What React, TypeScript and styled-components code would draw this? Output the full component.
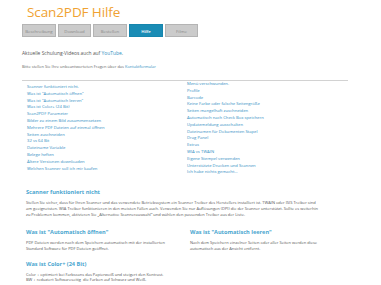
import React from "react";
import styled, { createGlobalStyle } from "styled-components";

const Global = createGlobalStyle`
  html, body { margin: 0; padding: 0; background: #fff; }
  body { font-family: "Open Sans", "Liberation Sans", sans-serif; color: #555; }
  * { box-sizing: border-box; }
`;

const Page = styled.div`
  width: 381px;
  height: 285px;
  overflow: hidden;
  padding: 3px 0 0 22px;
`;

const Content = styled.div`
  width: 326px;
`;

const Title = styled.h1`
  margin: 0 0 0 5px;
  font-size: 13.5px;
  font-weight: 400;
  line-height: 18px;
  color: #f0a232;
  letter-spacing: -0.1px;
`;

const Tabs = styled.nav`
  display: flex;
  gap: 2px;
  margin-top: 3px;
`;

const Tab = styled.div<{ $active?: boolean; $w: number }>`
  width: ${(p) => p.$w}px;
  height: 13px;
  display: flex;
  align-items: center;
  justify-content: center;
  font-size: 4.3px;
  border: 1px solid ${(p) => (p.$active ? "#1685ad" : "#b4b4b4")};
  background: ${(p) => (p.$active ? "#1a8cb5" : "#cbcbcb")};
  color: ${(p) => (p.$active ? "#fff" : "#8a8a8a")};
  font-weight: ${(p) => (p.$active ? 600 : 400)};
`;

const Intro = styled.p`
  margin: 13px 0 0 0;
  font-size: 4.9px;
  line-height: 7px;
  color: #555;
`;

const Small = styled.p`
  margin: 7px 0 0 0;
  font-size: 4px;
  line-height: 6px;
  color: #666;
`;

const Link = styled.a`
  color: #2f8fc2;
  text-decoration: none;
`;

const Rule = styled.hr`
  margin: 10px 0 0 0;
  border: 0;
  border-top: 1px solid #d2d2d2;
`;

const Columns = styled.div`
  display: grid;
  grid-template-columns: 165px 1fr;
`;

const LinkList = styled.ul<{ $top: number; $left: number }>`
  list-style: none;
  margin: 0;
  padding: ${(p) => p.$top}px 0 0 ${(p) => p.$left}px;
  font-size: 4.2px;
  line-height: 6.8px;
`;

const Item = styled.li`
  color: #3590c4;
  white-space: nowrap;
`;

const Section = styled.section<{ $top: number }>`
  padding-left: 4px;
  margin-top: ${(p) => p.$top}px;
`;

const Heading = styled.h2`
  margin: 0;
  font-size: 5.6px;
  line-height: 8px;
  font-weight: 700;
  color: #4aa6cf;
`;

const Body = styled.p<{ $top?: number }>`
  margin: ${(p) => p.$top ?? 4}px 0 0 0;
  font-size: 4px;
  line-height: 5.7px;
  color: #555;
  white-space: nowrap;
`;

const Pair = styled.div`
  display: grid;
  grid-template-columns: 164px 1fr;
`;

const left = [
  "Scanner funktioniert nicht.",
  'Was ist "Automatisch öffnen"',
  'Was ist "Automatisch leeren"',
  "Was ist Color+ (24 Bit)",
  "Scan2PDF Parameter",
  "Bilder zu einem Bild zusammensetzen",
  "Mehrere PDF Dateien auf einmal öffnen",
  "Seiten zuschneiden",
  "32 vs 64 Bit",
  "Dateiname Variable",
  "Belege heften",
  "Ältere Versionen downloaden",
  "Welchen Scanner soll ich mir kaufen",
];

const right = [
  "Menü verschwunden.",
  "Profile",
  "Barcode",
  "Keine Farbe oder falsche Seitengröße",
  "Seiten mangelhaft zuschneiden",
  "Automatisch nach Check Box speichern",
  "Updatemeldung ausschalten",
  "Dateinamen für Dokumenten Stapel",
  "Drag Panel",
  "Extras",
  "WIA vs TWAIN",
  "Eigene Stempel verwenden",
  "Unterstützte Drucken und Scannen",
  "Ich habe nichts gemacht...",
];

const tabs = [
  { label: "Beschreibung", w: 34 },
  { label: "Download", w: 33 },
  { label: "Bestellen", w: 34 },
  { label: "Hilfe", w: 34, active: true },
  { label: "Filme", w: 33 },
];

export default function App() {
  return (
    <Page>
      <Global />
      <Content>
        <Title>Scan2PDF Hilfe</Title>
        <Tabs>
          {tabs.map((t) => (
            <Tab key={t.label} $w={t.w} $active={t.active}>
              {t.label}
            </Tab>
          ))}
        </Tabs>
        <Intro>
          Aktuelle Schulung-Videos auch auf <Link href="#">YouTube</Link>.
        </Intro>
        <Small>
          Bitte stellen Sie Ihre unbeantworteten Fragen über das{" "}
          <Link href="#">Kontaktformular</Link>
        </Small>
        <Rule />
        <Columns>
          <LinkList $top={3} $left={5}>
            {left.map((l) => (
              <Item key={l}>{l}</Item>
            ))}
          </LinkList>
          <LinkList $top={0} $left={0}>
            {right.map((l) => (
              <Item key={l}>{l}</Item>
            ))}
          </LinkList>
        </Columns>
        <Section $top={12}>
          <Heading>Scanner funktioniert nicht</Heading>
          <Body $top={4}>
            Stellen Sie sicher, dass für Ihren Scanner und das verwendete Betriebssystem ein Scanner Treiber des Herstellers installiert ist. TWAIN oder ISIS Treiber sind
            <br />
            am geeignetsten. WIA Treiber funktionieren in den meisten Fällen auch. Verwenden Sie nur Auflösungen (DPI) die der Scanner unterstützt. Sollte es weiterhin
            <br />
            zu Problemen kommen, aktivieren Sie „Alternative Scannerauswahl“ und wählen den passenden Treiber aus der Liste.
          </Body>
        </Section>
        <Section $top={11}>
          <Pair>
            <div>
              <Heading>Was ist "Automatisch öffnen"</Heading>
              <Body>
                PDF Dateien werden nach dem Speichern automatisch mit der installierten
                <br />
                Standard Software für PDF Dateien geöffnet.
              </Body>
            </div>
            <div>
              <Heading>Was ist "Automatisch leeren"</Heading>
              <Body>
                Nach dem Speichern einzelner Seiten oder aller Seiten werden diese
                <br />
                automatisch aus der Ansicht entfernt.
              </Body>
            </div>
          </Pair>
        </Section>
        <Section $top={8}>
          <Heading>Was ist Color+ (24 Bit)</Heading>
          <Body>
            Color + optimiert bei Farbscans das Papierweiß und steigert den Kontrast.
            <br />
            BW + reduziert Softwareseitig &nbsp;die Farben auf Schwarz und Weiß.
          </Body>
        </Section>
      </Content>
    </Page>
  );
}
